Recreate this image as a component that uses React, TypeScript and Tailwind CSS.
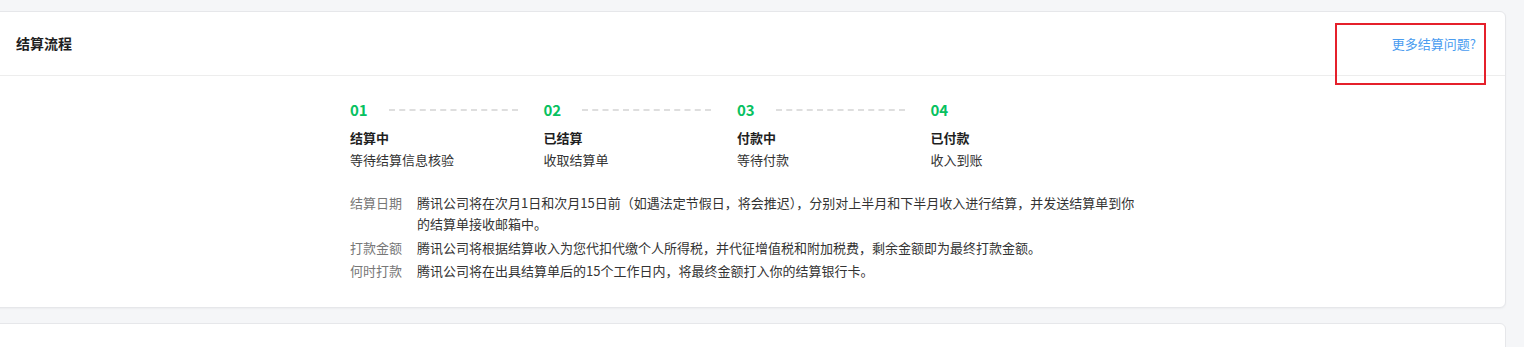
import React from "react";

const steps = [
  { no: "01", title: "结算中", sub: "等待结算信息核验" },
  { no: "02", title: "已结算", sub: "收取结算单" },
  { no: "03", title: "付款中", sub: "等待付款" },
  { no: "04", title: "已付款", sub: "收入到账" },
];

const rows = [
  {
    label: "结算日期",
    text: "腾讯公司将在次月1日和次月15日前（如遇法定节假日，将会推迟），分别对上半月和下半月收入进行结算，并发送结算单到你的结算单接收邮箱中。",
  },
  {
    label: "打款金额",
    text: "腾讯公司将根据结算收入为您代扣代缴个人所得税，并代征增值税和附加税费，剩余金额即为最终打款金额。",
  },
  {
    label: "何时打款",
    text: "腾讯公司将在出具结算单后的15个工作日内，将最终金额打入你的结算银行卡。",
  },
];

export default function App() {
  return (
    <div
      className="min-h-[347px] w-[1524px] overflow-hidden bg-[#f5f6f8] pt-[11px] pr-[18px]"
      style={{ fontFamily: '"Noto Sans CJK SC", "Noto Sans", sans-serif' }}
    >
      <div className="relative -ml-2 rounded-[6px] border border-[#e6e7ea] bg-white shadow-[0_1px_2px_rgba(0,0,0,0.04)]">
        <div className="flex h-[64px] items-center justify-between border-b border-[#ededed] pl-[23px] pr-[29px]">
          <span className="text-[14px] font-bold text-[#1f1f1f]">结算流程</span>
          <a className="text-[13px] text-[#4a9cf0]">更多结算问题?</a>
        </div>
        <div className="pointer-events-none absolute left-[1342px] top-[11px] h-[62px] w-[151px] border-2 border-[#e5202b]" />
        <div className="pl-[357px] pt-[24px] pb-[26px]">
          <div className="flex">
            {steps.map((s, i) => (
              <div key={s.no} className="w-[193.5px] shrink-0">
                <div className="flex h-5 items-center">
                  <span className="text-[15px] font-bold leading-5 text-[#07c160]">{s.no}</span>
                  {i < steps.length - 1 && (
                    <div className="ml-[21px] w-[129px] border-t-2 border-dashed border-[#dedede]" />
                  )}
                </div>
                <div className="mt-2 text-[13px] font-bold leading-5 text-[#1f1f1f]">{s.title}</div>
                <div className="mt-[2px] text-[13px] leading-5 text-[#333]">{s.sub}</div>
              </div>
            ))}
          </div>
          <div className="mt-[22px] flex flex-col gap-[2.5px]">
            {rows.map((r) => (
              <div key={r.label} className="flex text-[13px] leading-[21px]">
                <span className="w-[67px] shrink-0 text-[#777]">{r.label}</span>
                <span className="w-[730px] text-[#333]">{r.text}</span>
              </div>
            ))}
          </div>
        </div>
      </div>
      <div className="-ml-2 mt-[15px] h-[40px] rounded-t-[6px] border border-[#e6e7ea] bg-white" />
    </div>
  );
}
